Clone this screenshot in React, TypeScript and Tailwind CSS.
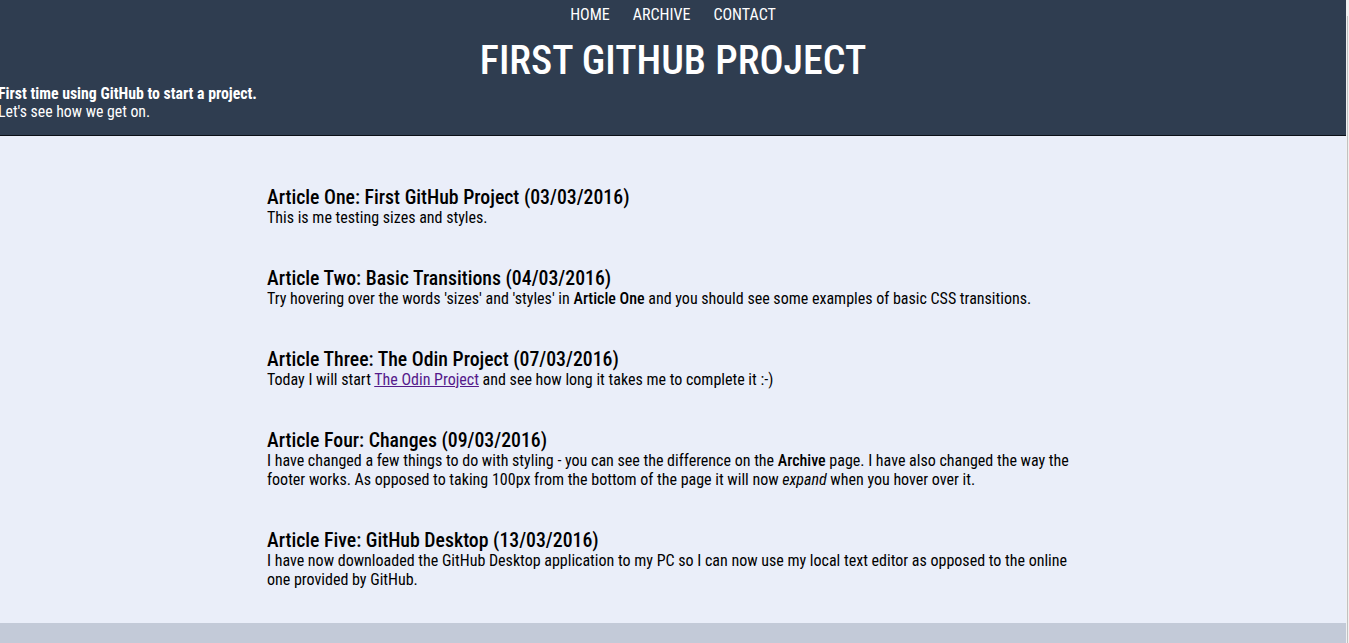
const FONT = "font-['Roboto_Condensed','Roboto',sans-serif] [font-stretch:condensed]";

const articles = [
  {
    title: "Article One: First GitHub Project (03/03/2016)",
    body: <>This is me testing sizes and styles.</>,
  },
  {
    title: "Article Two: Basic Transitions (04/03/2016)",
    body: (
      <>
        Try hovering over the words 'sizes' and 'styles' in{" "}
        <strong className="font-medium">Article One</strong> and you should see
        some examples of basic CSS transitions.
      </>
    ),
  },
  {
    title: "Article Three: The Odin Project (07/03/2016)",
    body: (
      <>
        Today I will start{" "}
        <a href="#" className="text-[#551a8b] underline">
          The Odin Project
        </a>{" "}
        and see how long it takes me to complete it :-)
      </>
    ),
  },
  {
    title: "Article Four: Changes (09/03/2016)",
    body: (
      <>
        I have changed a few things to do with styling - you can see the
        difference on the <strong className="font-medium">Archive</strong> page.
        I have also changed the way the footer works. As opposed to taking 100px
        from the bottom of the page it will now <em>expand</em> when you hover
        over it.
      </>
    ),
  },
  {
    title: "Article Five: GitHub Desktop (13/03/2016)",
    body: (
      <>
        I have now downloaded the GitHub Desktop application to my PC so I can
        now use my local text editor as opposed to the online one provided by
        GitHub.
      </>
    ),
  },
];

export default function App() {
  return (
    <div className={`flex min-h-screen w-full ${FONT}`}>
      <div className="flex min-h-[643px] flex-1 flex-col">
        {/* Header */}
        <header className="h-[136px] border-b border-[#0b0f16] bg-[#2f3d50] text-white">
          <nav className="flex justify-center gap-[23px] pt-[5px] text-[16px] leading-[19px]">
            <a href="#">HOME</a>
            <a href="#">ARCHIVE</a>
            <a href="#">CONTACT</a>
          </nav>
          <h1 className="mt-[13px] text-center text-[40px] font-medium leading-[48px]">
            FIRST GITHUB PROJECT
          </h1>
          <div className="-ml-[2px] text-[15.8px] leading-[18px]">
            <p className="font-bold">First time using GitHub to start a project.</p>
            <p>Let's see how we get on.</p>
          </div>
        </header>

        {/* Articles */}
        <main className="flex-1 bg-[#eaeef9] pb-[34px] pt-[48px] text-black">
          <div className="ml-[267px] flex w-[808px] flex-col gap-[38px]">
            {articles.map((a) => (
              <article key={a.title}>
                <h2 className="mt-[4px] text-[19.8px] font-medium leading-[20px]">{a.title}</h2>
                <p className="text-[16px] font-normal leading-[19px]">{a.body}</p>
              </article>
            ))}
          </div>
        </main>

        {/* Footer */}
        <footer className="h-[20px] bg-[#c3cad8]" />
      </div>
      <div className="w-[3px] bg-[#f1f1f1] pl-px">
        <div className="mt-[16px] h-full w-px bg-[#c1c1c1]" />
      </div>
    </div>
  );
}
